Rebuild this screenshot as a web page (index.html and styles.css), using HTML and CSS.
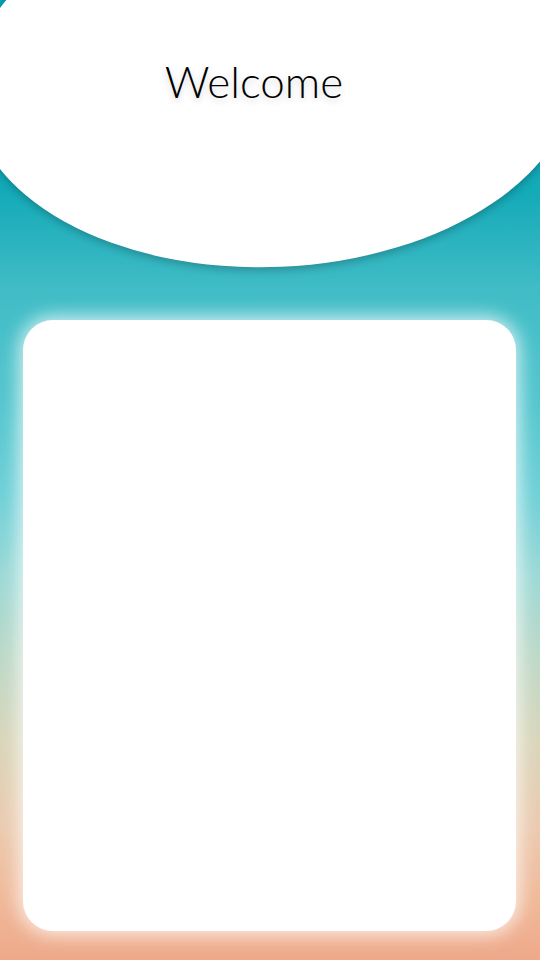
FILE: index.html
```html
<!DOCTYPE html>
<html lang="en">
<head>
<meta charset="utf-8">
<title>Welcome</title>
<link rel="stylesheet" href="styles.css">
</head>
<body>
<div class="screen">
  <header class="hero">
    <h1 class="hero-title">Welcome</h1>
  </header>
  <main class="card"></main>
</div>
</body>
</html>
```
FILE: styles.css
```css
html, body {
  margin: 0;
  padding: 0;
}
body {
  width: 540px;
  height: 960px;
  overflow: hidden;
}
.screen {
  width: 540px;
  height: 960px;
  overflow: hidden;
  display: flex;
  flex-direction: column;
  background: linear-gradient(180deg,
    #00a2b2 0%,
    #14aab8 20%,
    #40bcc6 30%,
    #55c6ce 42%,
    #72d1d8 52%,
    #9dd9d6 60%,
    #bcd9c8 68%,
    #d9d6bb 77%,
    #ebcbb0 86%,
    #f0bb9c 93%,
    #eea98a 100%);
  font-family: "Lato", "Open Sans", sans-serif;
}
.hero {
  flex: none;
  position: relative;
  z-index: 0;
  height: 267px;
  box-sizing: border-box;
  padding: 54px 32px 0 0;
  display: flex;
  justify-content: center;
  align-items: flex-start;
}
.hero::before {
  content: "";
  position: absolute;
  z-index: -1;
  left: -30px;
  top: -105px;
  width: 606px;
  height: 372px;
  background: #ffffff;
  border-radius: 50%;
  transform: rotate(-2.5deg);
  box-shadow: 0 3px 9px rgba(0, 0, 0, 0.24);
}
.hero-title {
  margin: 0;
  font-weight: 300;
  font-size: 44px;
  line-height: 54px;
  color: #000;
  text-shadow: 0 3px 7px rgba(0, 0, 0, 0.18);
}
.card {
  flex: none;
  width: 493px;
  height: 611px;
  margin: 53px 0 0 23px;
  background: #ffffff;
  border-radius: 30px;
  box-shadow: 0 0 18px 4px rgba(255, 255, 255, 0.75);
}
```
